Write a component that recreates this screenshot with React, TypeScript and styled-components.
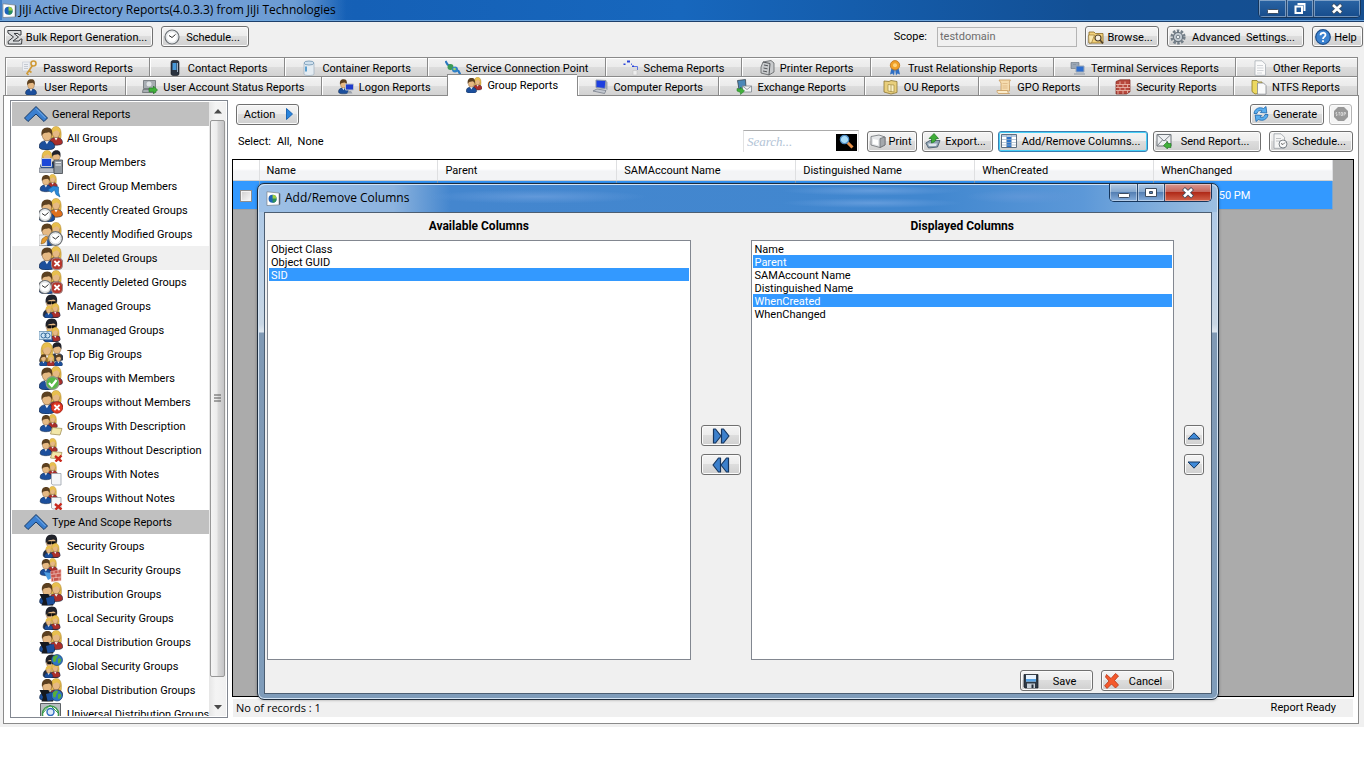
import React from "react";
import styled, { createGlobalStyle, css } from "styled-components";

const UI = `Roboto, "Liberation Sans", Arial, sans-serif`;
const TITLE = `"Open Sans", "Noto Sans", sans-serif`;

const GlobalStyle = createGlobalStyle`
  * { box-sizing: border-box; }
  body { margin: 0; background: #fff; font: 11px/16px ${UI}; color: #000; }
  button, input, select { font: inherit; color: inherit; }
  svg { display: block; flex: none; }
`;

/* ---------- icon pieces ---------- */

type PersonProps = { x?: number; y?: number; s?: number; hair?: string; body?: string; long?: boolean; shades?: boolean };

const Person = ({ x = 0, y = 0, s = 1, hair = "#5c4020", body = "#1c4f9c", long, shades }: PersonProps) => (
  <g transform={`translate(${x} ${y}) scale(${s})`}>
    {long && <path d="M2.500 14C1.200 4 4 .6 8 .6s6.800 3.400 5.500 13.400z" fill={hair} stroke="#a37a1c" strokeWidth=".5" />}
    <path d="M.6 19C.6 15 3.500 13 8 13s7.400 2 7.400 6c0 3.800-14.800 3.800-14.800 0z" fill={body} stroke="#10233f" strokeWidth=".6" />
    <path d="M6 13l2 3.500 2-3.500z" fill="#f4f6fa" />
    <ellipse cx="8" cy="7.800" rx="4.400" ry="5.400" fill="#e6b983" stroke="#7c5630" strokeWidth=".5" />
    <path d={long ? "M3.400 9C2.800 3 5 1.200 8 1.200s5 1.800 4.800 7.800C11.500 6 9.500 5 8.500 4.800 7 6 4.500 6 3.400 9z" : "M3 8.500C2 3 4.500.4 8.300.4c4 0 5.500 2.600 4.600 8.100C12.200 6 11 5.200 9.600 5 7 5.800 4.500 5 3 8.500z"} fill={hair} />
    {shades && <path d="M4 6.800h3.600v2.200H4.600zM8.400 6.800H12l-.6 2.200H8.400zM7.600 7h.8" fill="#111" stroke="#111" strokeWidth=".5" />}
  </g>
);

const BLONDE = "#e8bf4e";
const RED = "#a92f2b";
const DARK = "#20222a";

const BigPair = ({ right = RED }: { right?: string }) => (
  <g>
    <Person x={10} y={0} s={0.880} hair={BLONDE} body={right} long />
    <Person x={-0.500} y={1} s={1.050} />
  </g>
);
const SmallPair = ({ x = 1, y = 0, s = 0.680 }: { x?: number; y?: number; s?: number }) => (
  <g transform={`translate(${x} ${y}) scale(${s})`}>
    <BigPair />
  </g>
);
const Clock = ({ x, y, r = 6.500 }: { x: number; y: number; r?: number }) => (
  <g>
    <circle cx={x} cy={y} r={r} fill="#f1f4f6" stroke="#6c7074" strokeWidth="1.200" />
    <circle cx={x} cy={y} r={r - 1.600} fill="#fff" stroke="#c4c8cc" strokeWidth=".5" />
    <path d={`M${x - 3} ${y - 1.500}L${x} ${y + 0.500}L${x + 3.500} ${y - 2.500}`} fill="none" stroke="#333" strokeWidth="1" />
  </g>
);
const CrossBadge = ({ round }: { round?: boolean }) => (
  <g>
    {round ? <circle cx="18" cy="17.500" r="5.700" fill="#e03a26" stroke="#a31d10" strokeWidth=".8" /> : <rect x="12.500" y="12" width="11" height="11.500" rx="4" fill="#b5352c" stroke="#9d8c8c" strokeWidth="1" />}
    <path d="M15.400 15l5.200 5.200M20.600 15l-5.200 5.200" stroke="#fff" strokeWidth="1.800" />
  </g>
);
const RedX = () => <path d="M16 18l6.500 5.500M22.500 17.500L16.500 23.500" stroke="#c8281c" strokeWidth="2.400" fill="none" />;
const Globe = ({ x, y, r = 5.500 }: { x: number; y: number; r?: number }) => (
  <g transform={`translate(${x} ${y}) scale(${r / 5.500})`}>
    <circle r="5.500" fill="#2f76c4" stroke="#1a4374" strokeWidth=".7" />
    <path d="M-4-3C-2-5 1-5 1-4S-1-2-1 0-3 3-4 1zM1-1C3-3 5-1 4 1S2 4 1 3z" fill="#58ae3a" />
  </g>
);
const Note = ({ fill = "#f2e7a8" }: { fill?: string }) => <path d="M13.500 13.500l9.500 1-2 6.500-9.500-1z" fill={fill} stroke="#a5935a" strokeWidth=".8" />;
const Page = () => <path d="M12.500 11.500h9.500V23h-8l-1.500-1z" fill="#f4f6f8" stroke="#9aa1aa" strokeWidth=".8" />;
const Laptop = () => <path d="M.5 12h9l3 7H16l-2 4.500H2.500L4 19z" fill="#15181f" />;
const Agent = () => (
  <g>
    <Person x={3.500} y={0} s={1.120} hair={DARK} body="#2a3040" shades />
    <Person x={11} y={9} s={0.660} hair={BLONDE} body={RED} long />
    <Person x={5} y={11.500} s={0.580} hair={BLONDE} />
  </g>
);
const Typist = () => (
  <g>
    <Person x={10} y={0} s={0.900} hair={BLONDE} body={RED} long />
    <Person x={0} y={0.500} s={1.020} />
    <Laptop />
    <path d="M7 16l8-2 .5 8-7 1z" fill="#1c4f9c" />
  </g>
);

const groupArt: Record<string, React.ReactNode> = {
  all: <BigPair />,
  members: (
    <g>
      <Person x={10.500} y={0} s={0.840} hair={DARK} body="#333a48" />
      <Person x={1} y={0} s={0.880} hair={BLONDE} long />
      <path d="M2.500 8.500h10v8h-10z" fill="#1d48d8" stroke="#c5cbd6" />
      <path d="M0 18h14l1.500 4.500H.5z" fill="#b7bdc8" stroke="#5b6371" strokeWidth=".6" />
      <path d="M15 10h8.500v13.500H15z" fill="#8f979f" stroke="#42484f" strokeWidth=".8" />
      <path d="M16.500 12.500h5.500M16.500 15h5.500" stroke="#e7eaee" />
    </g>
  ),
  direct: (
    <g>
      <SmallPair s={0.740} />
      <path d="M9 16l5-4 5.500 1v5.500l1.500 4.500-4-2.500-1.500-4.500-3 2.500z" fill="#2b8ad8" stroke="#1560a0" strokeWidth=".6" />
    </g>
  ),
  created: <g><BigPair right="#e0701c" /><Clock x={6} y={17} /></g>,
  modified: (
    <g>
      <BigPair />
      <path d="M0 13h8v10.500H0z" fill="#f0f1f3" stroke="#9a9a9a" strokeWidth=".6" />
      <path d="M2 22l1-5 4-3 2 2-3.500 5z" fill="#e59a2c" stroke="#7c4d0c" strokeWidth=".5" />
      <Clock x={16.500} y={16.500} r={6.800} />
    </g>
  ),
  deleted: <g><BigPair /><CrossBadge /></g>,
  recentDeleted: <g><BigPair /><Clock x={6} y={17} /><CrossBadge /></g>,
  agent: <Agent />,
  unmanaged: (
    <g>
      <Agent />
      <path d="M0 13.500h12.500v8H0z" fill="#cfe6f6" stroke="#6a8fb0" strokeWidth=".8" />
      <circle cx="4.500" cy="17.500" r="2.500" fill="none" stroke="#356c9c" /><circle cx="8.500" cy="17.500" r="2.500" fill="none" stroke="#356c9c" />
    </g>
  ),
  top: (
    <g>
      <Person x={11} y={0} s={0.880} hair={DARK} body="#333a48" />
      <Person x={0} y={0} s={1} hair={BLONDE} body="#8f6a2c" long />
      <Person x={0} y={12} s={0.560} /><Person x={7.500} y={12} s={0.560} hair={BLONDE} body={RED} long /><Person x={15} y={12} s={0.560} />
    </g>
  ),
  check: (
    <g>
      <BigPair />
      <circle cx="13.500" cy="17" r="6.400" fill="#57b947" stroke="#8a9a88" strokeWidth="1.200" />
      <path d="M10 17l2.800 3 4.700-6" stroke="#fff" strokeWidth="2.200" fill="none" />
    </g>
  ),
  cross: <g><BigPair /><CrossBadge round /></g>,
  note: <g><SmallPair s={0.740} /><Note /></g>,
  noNote: <g><SmallPair s={0.740} /><Note /><RedX /></g>,
  page: <g><SmallPair s={0.740} /><Page /></g>,
  noPage: <g><SmallPair s={0.740} /><Page /><RedX /></g>,
  builtIn: (
    <g>
      <SmallPair s={0.740} />
      <path d="M5 14l7 1 1 5-4 2z" fill="#4a9be0" />
      <path d="M11.500 13.500L22 11.500v11l-9.500 1z" fill="#c8564c" stroke="#e8b0a8" strokeWidth=".6" />
      <path d="M12 16.500l10-1.500M12 20l10-1M15 13v3.500M19 12v3.500M17 16v4M14.500 20v3M20 19v4" stroke="#f0c4bc" strokeWidth=".7" />
    </g>
  ),
  typist: <Typist />,
  globalAgent: <g><Agent /><Globe x={18} y={6} /></g>,
  globalTypist: <g><Typist /><Globe x={18} y={17.500} /></g>,
  universal: (
    <g>
      <path d="M1.500 1.500h20v22h-20z" fill="#b9bec2" stroke="#5d6266" />
      <circle cx="11.500" cy="12" r="8" fill="#fff" stroke="#3c9a4c" strokeWidth="1.400" />
      <circle cx="11.500" cy="10" r="3.500" fill="#dceafa" stroke="#2f6cc0" strokeWidth="1.400" />
      <path d="M3 12L11 3l9 9" stroke="#3c9a4c" fill="none" />
    </g>
  ),
};

const GroupIcon = ({ kind }: { kind: string }) => (
  <svg width="24" height="24" viewBox="0 0 24 24" aria-hidden="true">{groupArt[kind]}</svg>
);

const smallArt: Record<string, React.ReactNode> = {
  app: (
    <g>
      <path d="M1 .8l13 1.400v12.600L1 15.500z" fill="#fdfdfd" stroke="#6e7884" strokeWidth=".7" />
      <path d="M14 2.200l1.200.8v11l-1.200.8z" fill="#4c5664" />
      <circle cx="7" cy="8.200" r="4.300" fill="#1e63b8" />
      <path d="M7 8.200V3.900a4.300 4.300 0 0 1 4.300 4.300z" fill="#9ccf3c" /><path d="M7 8.200h4.300A4.300 4.300 0 0 1 7 12.500z" fill="#2c9058" />
    </g>
  ),
  sigma: (
    <path d="M.8 1.500H14v4.500h-2l-1-1.500H7L11.500 8 6 12h6l1.500-2H15l-.5 5H1.500l-.5-2.500L6.500 8 1 4z" fill="#d8dadc" stroke="#3b3e42" />
  ),
  clock: <Clock x={8} y={8} r={7} />,
  browse: (
    <g>
      <path d="M1 3h5l1.500 1.500H15V14H1z" fill="#f3d27c" stroke="#8a6a24" strokeWidth=".8" />
      <path d="M.5 6h6l-3 8H1z" fill="#fae7ae" stroke="#8a6a24" strokeWidth=".6" />
      <circle cx="10" cy="9" r="3" fill="#f6efe0" stroke="#54432a" strokeWidth="1.200" /><path d="M12 11l3 3.500" stroke="#54432a" strokeWidth="1.800" />
    </g>
  ),
  gear: (
    <g>
      <circle cx="8" cy="8" r="6.300" fill="none" stroke="#75808a" strokeWidth="2.600" strokeDasharray="2.500 1.460" />
      <circle cx="8" cy="8" r="4.600" fill="#c6ced5" stroke="#69747e" strokeWidth="1.200" /><circle cx="8" cy="8" r="1.800" fill="#eef1f3" stroke="#5b6670" strokeWidth=".8" />
    </g>
  ),
  help: (
    <g>
      <circle cx="8" cy="8" r="7.300" fill="#3b82d0" stroke="#1d4f8c" strokeWidth="1.200" />
      <path d="M5.500 6.200C5.500 3 10.500 3 10.500 6c0 2-2.500 1.800-2.500 4M8 11.200v1.800" stroke="#fff" strokeWidth="1.800" fill="none" />
    </g>
  ),
  password: (
    <g>
      <path d="M.5 2h7.500v9H.5z" fill="#eceef2" stroke="#c4c8d0" strokeWidth=".6" /><path d="M2 4.500h4M2 6.500h4M2 8.500h4" stroke="#b4bac4" strokeWidth=".7" />
      <circle cx="11.500" cy="3.500" r="2.500" fill="none" stroke="#cf9a38" strokeWidth="1.600" />
      <path d="M10.500 5.500L5 13.500l1.500 1.500M7.500 11l2 1.500" stroke="#cf9a38" strokeWidth="1.600" fill="none" />
    </g>
  ),
  contact: <g><rect x="4" y=".5" width="8" height="15" rx="2" fill="#2a3340" stroke="#12161c" strokeWidth=".6" /><path d="M5.500 3h4v7h-4z" fill="#4798d8" /><path d="M10.500 3v9" stroke="#9fb2c4" /></g>,
  container: <g><path d="M3 3.500h10V14c0 2-10 2-10 0z" fill="#e4ecf2" stroke="#9db0bf" strokeWidth=".7" /><ellipse cx="8" cy="3" rx="5" ry="2" fill="#cfe0ee" stroke="#6f93b0" strokeWidth=".8" /><path d="M5 6.500v5" stroke="#5a9fd0" strokeWidth="2" /></g>,
  link: <g><path d="M.5 1l2 3.500 4 2.500M9.500 9l4 2 2 4" stroke="#2b78c0" strokeWidth="2.200" fill="none" /><circle cx="5.500" cy="7" r="3" fill="#3c9a54" /><circle cx="10" cy="9.500" r="3" fill="#2f80c8" /><circle cx="9.500" cy="9" r="1.300" fill="#9bdc66" /></g>,
  schema: <g><path d="M4 .5h3v2H4zM.5 3.500h2v1.500h-2zM9 5.500h2v1.500H9z" fill="#2a44d8" /><path d="M11 6.500h3.500V10M8.500 3.500v1.500" stroke="#5c74e4" fill="none" /><path d="M10 10.500h4V15h-4z" fill="#eee" stroke="#c2c2c2" strokeWidth=".6" /></g>,
  printer: <g><path d="M4 2l8-1.500L15 3v9l-5 3-8-2V7z" fill="#c9cbcd" stroke="#4d5053" strokeWidth=".7" /><path d="M4 2l7 1.500L10 15M5 5l4 .8M4.500 8l4 .8M4 11l4 .8" stroke="#55585b" fill="none" /></g>,
  ribbon: <g><path d="M4.500 8L3 14.500l2.500-1 1.500 2L8 9zM11.500 8L13 14.500l-2.500-1-1.500 2L8 9z" fill="#2f6fc4" /><circle cx="8" cy="5.300" r="4.700" fill="#f0a028" stroke="#b9701a" strokeWidth=".8" /><circle cx="8" cy="5.300" r="2" fill="#ffd27a" /></g>,
  terminal: <g><path d="M1 2.500h8v6H1z" fill="#9aa6b4" stroke="#64707c" strokeWidth=".6" /><path d="M6 6h8v6H6z" fill="#2e6fd0" stroke="#9aa6b4" /><path d="M4 14h11M3 4.500h3" stroke="#8a96a4" strokeWidth="1.200" /></g>,
  doc: <g><path d="M3 .8h7l3.500 3.500v11H3z" fill="#fafafa" stroke="#aab0b6" strokeWidth=".8" /><path d="M5 5.500h6M5 8h6.500M5 10.500h6.500M5 13h5" stroke="#c8ccd0" strokeWidth=".8" /></g>,
  user: <Person x={2} y={0} s={0.750} />,
  status: <g><path d="M1.500 1.500h12v8h-12zM1 10.500h11l2 3H.5z" fill="#a7adb2" stroke="#5c6166" strokeWidth=".7" /><circle cx="7" cy="5" r="2.500" fill="#e0e3e6" /><path d="M7 9h4.500V7l4 4-4 4v-2.200H7z" fill="#41b03a" stroke="#1d7420" strokeWidth=".6" /></g>,
  logon: <g><Person x={0} y={0} s={0.680} /><path d="M7.500 5h8v6h-8z" fill="#1f3ccc" stroke="#b8bec8" /><path d="M10.500 12h2.500l1.500 2.500H9z" fill="#9aa1ab" /></g>,
  group: <g transform="scale(.68)"><BigPair /></g>,
  computer: <g><path d="M4 1l10 .5-1 8-9-1z" fill="#1d3fe0" stroke="#8d97a8" /><path d="M1 12l4-2 9 1.500-1.500 3z" fill="#c3c8d0" stroke="#6b7280" strokeWidth=".7" /><path d="M14 2l1.500 1v8l-2-1" fill="#9aa2b0" /></g>,
  exchange: <g><path d="M1.500 1.500l8-1 .5 9-7 1z" fill="#4a88b8" stroke="#38444e" strokeWidth=".8" /><path d="M6.500 7h9v6h-9z" fill="#f2f4f6" stroke="#7d858d" strokeWidth=".8" /><path d="M6.500 7l4.500 3.500L15.500 7" stroke="#7d858d" fill="none" strokeWidth=".8" /><path d="M1 9.500l3.500.5v-2l4 4-4 3.500v-2L1 12z" fill="#41b03a" stroke="#1d7420" strokeWidth=".5" /></g>,
  ou: <g><path d="M1 2l5 .5 2-1 6 1v11L8 15l-7-2z" fill="#e9cf7c" stroke="#8a7430" strokeWidth=".8" /><path d="M5 5.500l6 .5v7l-6-1zM8 6v7" fill="#faf0c4" stroke="#a08a40" strokeWidth=".7" /></g>,
  gpo: <g><path d="M3 1h11.500c-1.500 1.500-1 3-1 4.500V12H5V4z" fill="#f6dcae" stroke="#c89a5c" strokeWidth=".8" /><path d="M1 11.500h10.500c0 1.500 1 3 2 3H3c-1.500 0-2-1.500-2-3z" fill="#fbeccb" stroke="#c89a5c" strokeWidth=".8" /><path d="M6.500 4.500h5M6.500 7h5M6.500 9h5" stroke="#d8b07c" strokeWidth=".7" /></g>,
  brick: <g><path d="M1 2.500L5 .8h10v12L11.500 15H1z" fill="#b8483c" stroke="#7c2a22" strokeWidth=".7" /><path d="M1 5.500h14M1 8.500h14M1 11.500h14M5 2.500v3M10 2.500v3M3 5.500v3M8 5.500v3M12.500 5.500v3M5 8.500v3M10 8.500v3M3 11.500V15M8 11.500V15M12.500 11.500V14" stroke="#ecc0b4" strokeWidth=".8" /></g>,
  ntfs: <g><path d="M1 1.500h5L7 3h4v11l-7 1-3-2.500z" fill="#ecd860" stroke="#8c7a20" strokeWidth=".8" /><path d="M6.500 4h6l2.500 2.500v8.700H6.500z" fill="#fafafa" stroke="#85898e" strokeWidth=".8" /></g>,
  refresh: <g><path d="M1 7.500C1.500 2.500 6.500.5 10.500 2.500L13 .5l.8 6.500-6.500-.5L9 4.800C6.500 4 4.500 5 4 7.500z" fill="#5aaeee" stroke="#1c66ac" strokeWidth=".8" /><path d="M15 8.500c-.5 5-5.500 7-9.500 5L3 15.500 2.200 9l6.500.5L7 11.200c2.500.8 4.500-.2 5-2.700z" fill="#5aaeee" stroke="#1c66ac" strokeWidth=".8" /></g>,
  print: <g><path d="M1 3.500l8-1.500 6 2v8l-5 2.500L1 12z" fill="#e4e6e8" stroke="#6c7074" strokeWidth=".8" /><path d="M10 5.500v9l5-2.500V4z" fill="#a4a8ac" stroke="#6c7074" strokeWidth=".8" /><path d="M3 6l5 1v5l-5-1z" fill="#fff" /></g>,
  export: <g><path d="M.8 10l4-2.500H15L12.500 14l-9 1z" fill="#8fa3b4" stroke="#3f5262" strokeWidth=".8" /><path d="M3 10.500h9l-1 2.500H4z" fill="#dfe6ec" /><path d="M6.500 10V5.500H4L9 .5l4.500 5H11c0 2-1 3.500-4.500 4.500z" fill="#3fae38" stroke="#1b7020" strokeWidth=".7" /></g>,
  columns: <g><path d="M.5 1.500h15v13H.5z" fill="#fff" stroke="#5e6e80" /><path d="M5.500 2h5v12h-5z" fill="#2c73c8" /><path d="M1 2h14v2H1z" fill="#b4c8de" /><path d="M1 6.500h14M1 9.500h14M1 12h14M5.500 2v12M10.500 2v12" stroke="#9cb0c6" strokeWidth=".7" /></g>,
  mail: <g><path d="M1 1.500h14v11.500H1z" fill="#eef0f2" stroke="#6d7378" /><path d="M1 1.500l7 6.500 7-6.500M1 13l5.500-6M15 13L9.500 7" stroke="#7b8187" fill="none" /><path d="M7.500 12.500l4-4v2h3.500v4h-3.500v1.500z" fill="#41b03a" stroke="#1b7020" strokeWidth=".6" /></g>,
  docClock: <g><path d="M2 .8h7l3.500 3.500v11H2z" fill="#f5f5f5" stroke="#9aa0a6" strokeWidth=".8" /><path d="M4 5.500h5M4 8h4" stroke="#b0b4b8" strokeWidth=".8" /><circle cx="11" cy="11" r="4" fill="#f8f8f8" stroke="#7c8288" /><path d="M9 10.500l2 1 2-2" stroke="#444" fill="none" strokeWidth=".8" /></g>,
  save: <g><path d="M1 1.500h14V15H2L1 14z" fill="#2f3a46" stroke="#151b22" strokeWidth=".7" /><path d="M3 2h10v6.500H3z" fill="#e8f2fc" /><path d="M3 6h10v2.500H3z" fill="#57a4e6" /><path d="M4 10.500h8V15H4z" fill="#c8d0d8" /><path d="M8.500 11.500h2V15h-2z" fill="#222c38" /></g>,
  cancel: <path d="M2.500 1.500L7 5.500l4.500-5L14.500 3 10.500 7.500l4 4.500-3 3-4-4-4.500 4.500-2.300-2.800L5 8 1.500 4z" fill="#f4592c" stroke="#b83414" strokeWidth=".8" />,
};

const Icon = ({ kind, size = 16 }: { kind: string; size?: number }) => (
  <svg width={size} height={size} viewBox="0 0 16 16" aria-hidden="true">{smallArt[kind]}</svg>
);

/* ---------- window chrome ---------- */

const Window = styled.div`
  position: relative;
  background: #f0f0f0;
  padding-bottom: 3px;
`;

const TitleBar = styled.header`
  display: flex;
  align-items: flex-start;
  height: 22px;
  padding: 0 3px 0 2px;
  border-bottom: 1px solid #1d3f6b;
  box-shadow: inset 0 -1px #6ea6dd;
  background: linear-gradient(90deg, #3f7dc4 0, #1560b6 26%, #1767bd 50%, #124f94 80%, #164f90 100%);
`;

const Caption = styled.h1`
  display: flex;
  align-items: center;
  gap: 2px;
  margin: 0 auto 0 0;
  padding-right: 10px;
  height: 20px;
  font: 12px/20px ${TITLE};
  background: linear-gradient(90deg, #6f9fd6, #7aa5d8 20%, #6c9cd4 85%, transparent);
`;

const WindowButtons = styled.div`
  display: flex;
  height: 18px;
  border: 1px solid #16365c;
  border-top: 0;
  border-radius: 0 0 5px 5px;
  overflow: hidden;
`;

const WindowButton = styled.button<{ $wide?: boolean; $tone?: "bar" | "glass" | "red" }>`
  display: grid;
  place-items: center;
  width: ${(p) => (p.$wide ? 47 : 27)}px;
  padding: 0;
  border: 0;
  box-shadow: inset 0 0 0 1px rgba(255, 255, 255, 0.4);
  background: ${(p) =>
    p.$tone === "red"
      ? "linear-gradient(#d99a94 0, #c4665c 45%, #b02a18 50%, #d2624a 100%)"
      : p.$tone === "glass"
      ? "linear-gradient(#b4cbe4 0, #86a9d0 45%, #5580b4 50%, #86aedc 100%)"
      : "linear-gradient(#2a64a4, #164c8c)"};
  & + & { border-left: 1px solid #2b4a70; }
`;

const Minimize = () => (
  <svg width="12" height="12"><rect x=".5" y="6.500" width="11" height="4" rx="1" fill="#fff" stroke="#3c4c60" /></svg>
);
const Maximize = () => (
  <svg width="12" height="12"><path d="M.5 1.500h11v8H.5zM4.500 4.500h3v2h-3z" fill="#fff" fillRule="evenodd" stroke="#3c4c60" /></svg>
);
const Restore = () => (
  <svg width="12" height="12"><path d="M3.500 1h7v7M1.500 3.500h6.500v6.500H1.500z" fill="none" stroke="#fff" strokeWidth="2" /></svg>
);
const CloseX = () => (
  <svg width="14" height="12"><path d="M2.500 1.500l9 8.500M11.500 1.500l-9 8.500" stroke="#3c4c60" strokeWidth="4.200" /><path d="M3 2l8 7.500M11 2L3 9.500" stroke="#fff" strokeWidth="2.600" /></svg>
);

/* ---------- shared controls ---------- */

const Text = styled.span`
  padding-top: 2px;
`;

const Button = styled.button<{ $w?: number; $active?: boolean }>`
  display: inline-flex;
  align-items: center;
  justify-content: center;
  flex: none;
  height: 21px;
  min-width: ${(p) => p.$w ?? 20}px;
  padding: 0 2px;
  white-space: nowrap;
  border: 1px solid #707070;
  border-radius: 3px;
  background: linear-gradient(#f4f4f4 0, #ececec 48%, #dddddd 50%, #d0d0d0 100%);
  box-shadow: inset 0 0 0 1px #fbfbfb;
  ${(p) => p.$active && css`
    border-color: #3c7fb1;
    box-shadow: inset 0 0 0 1px #48d0f8;
  `}
  &:disabled { border-color: #b4b4b4; background: #f4f4f4; }
  ${Text} {
    flex: 1;
    text-align: center;
  }
`;

const Toolbar = styled.div`
  display: flex;
  align-items: center;
  gap: 8px;
  height: 35px;
  padding: 0 1px 6px 4px;
`;

const ScopeField = styled.div`
  display: flex;
  align-items: center;
  gap: 10px;
  margin-left: auto;
`;

const ScopeInput = styled.input`
  width: 140px;
  height: 20px;
  padding: 0 2px;
  border: 1px solid #b4b4b4;
  background: #f0f0f0;
  color: #6d6d6d;
`;

/* ---------- tabs ---------- */

const TabRow = styled.div`
  display: flex;
  height: 19px;
  margin: 0 6px 0 5px;
  border-right: 1px solid #8a8a8a;
`;

const Tab = styled.button<{ $grow: number; $on?: boolean }>`
  display: flex;
  align-items: center;
  justify-content: center;
  gap: 5px;
  flex: ${(p) => p.$grow} 1 0;
  min-width: 0;
  height: 19px;
  padding: 2px 0 0;
  white-space: nowrap;
  overflow: hidden;
  border: 0;
  border-top: 1px solid #8a8a8a;
  border-left: 1px solid #8a8a8a;
  box-shadow: inset 1px 1px #fff;
  background: linear-gradient(#f2f2f2 0, #ebebeb 48%, #dddddd 50%, #d2d2d2 100%);
  ${(p) => p.$on && css`
    height: 22px;
    margin-top: -2px;
    z-index: 1;
    padding: 0 0 2px;
    background: #fff;
  `}
`;

const TabPanel = styled.main`
  display: flex;
  gap: 4px;
  margin: 0 5px 0 3px;
  padding: 4px 4px 5px 6px;
  border: 1px solid #8a8a8a;
  background: #fff;
`;

/* ---------- sidebar ---------- */

const Sidebar = styled.nav`
  display: flex;
  flex: none;
  width: 218px;
  height: 618px;
  border: 1px solid #828790;
  padding: 1px;
`;

const Tree = styled.div`
  flex: 1;
  overflow: hidden;
`;

const SectionHeader = styled.button`
  display: flex;
  align-items: center;
  gap: 4px;
  width: 100%;
  height: 24px;
  padding: 0 0 0 12px;
  border: 0;
  background: #c0c0c0;
`;

const TreeList = styled.ul`
  margin: 0;
  padding: 0;
  list-style: none;
`;

const TreeLink = styled.a<{ $on?: boolean }>`
  display: flex;
  align-items: center;
  gap: 4px;
  height: 24px;
  padding-left: 27px;
  white-space: nowrap;
  color: inherit;
  text-decoration: none;
  background: ${(p) => (p.$on ? "#f0f0f0" : "transparent")};
`;

const ScrollBar = styled.div`
  display: flex;
  flex-direction: column;
  align-items: center;
  width: 17px;
  background: linear-gradient(90deg, #e6e6e6, #f4f4f4 40%, #f0f0f0);
`;

const ScrollArrow = styled.button`
  display: grid;
  place-items: center;
  width: 17px;
  height: 18px;
  padding: 0;
  border: 0;
  background: transparent;
`;

const Thumb = styled.div`
  display: grid;
  place-items: center;
  width: 15px;
  height: 557px;
  margin-bottom: auto;
  border: 1px solid #979797;
  border-radius: 2px;
  background: linear-gradient(90deg, #f4f4f4 0, #ebebeb 48%, #dadada 52%, #c4c4c6 100%);
`;

const Chevron = () => (
  <svg width="24" height="18" viewBox="0 0 24 18" aria-hidden="true">
    <path d="M12 1.500L23.500 13l-3.500 3.500-8-7.500-8 7.500L.5 13z" fill="#3a7fd0" stroke="#173a66" />
    <path d="M12 3.500L21.500 13" stroke="#7fb4ec" fill="none" />
  </svg>
);

/* ---------- report pane ---------- */

const Report = styled.section`
  display: flex;
  flex: 1;
  flex-direction: column;
  min-width: 0;
`;

const ActionRow = styled.div<{ $tall?: boolean }>`
  display: flex;
  align-items: center;
  gap: ${(p) => (p.$tall ? 8 : 5)}px;
  height: ${(p) => (p.$tall ? 30 : 24)}px;
  padding: 0 ${(p) => (p.$tall ? 1 : 2)}px 0 4px;
  margin-top: ${(p) => (p.$tall ? 0 : 2)}px;
`;

const Push = styled.div`
  display: flex;
  align-items: center;
  gap: 5px;
  margin-left: auto;
`;

const SelectLinks = styled.div`
  display: flex;
  gap: 6px;
  padding: 2px 0 0 2px;
  a { color: inherit; text-decoration: none; }
`;

const SearchBox = styled.div`
  display: flex;
  align-items: center;
  width: 116px;
  height: 22px;
  margin-right: 3px;
  padding: 1px 1px 0 3px;
  border: solid #e2e2e2;
  border-width: 1px 1px 0;
  border-top-color: #ababab;
  input {
    flex: 1;
    min-width: 0;
    padding: 0;
    border: 0;
    outline: 0;
    font: italic 13px/18px "Liberation Serif", serif;
    &::placeholder { color: #b3c4d6; opacity: 1; }
  }
  button {
    display: grid;
    place-items: center;
    width: 21px;
    height: 17px;
    padding: 0;
    border: 0;
    background: #000;
  }
`;

const TableFrame = styled.div`
  flex: 1;
  margin-top: 3px;
  border: 1px solid #000;
  background: #ababab;
  overflow: hidden;
`;

const DataTable = styled.table`
  width: 1100px;
  table-layout: fixed;
  border-collapse: collapse;
  th, td { padding: 3px 0 0 7px; text-align: left; font-weight: 400; }
  th {
    height: 20px;
    border-right: 1px solid #dedfe1;
    border-bottom: 1px solid #d0d0d0;
    background: linear-gradient(#fff 45%, #f3f4f6 55%);
  }
  td {
    height: 29px;
    color: #fff;
    background: #3399ff;
    border-right: 1px solid #7ba6d0;
    border-bottom: 1px solid #a0a0a0;
    white-space: nowrap;
  }
  input {
    display: block;
    appearance: none;
    width: 12px;
    height: 12px;
    margin: 0;
    border: 1px solid #8e8f8f;
    background: linear-gradient(135deg, #cfcfcf, #fafafa);
    box-shadow: inset 0 0 0 1px #f4f4f4;
  }
`;

const StatusBar = styled.footer`
  display: flex;
  justify-content: space-between;
  align-items: center;
  height: 18px;
  margin: 2px 1px 1px;
  padding: 0 17px 0 3px;
  background: #f0f0f0;
`;

const RecordCount = styled.span`
  font: 11px/18px ${TITLE};
`;

/* ---------- dialog ---------- */

const DialogWindow = styled.div`
  position: absolute;
  top: 183px;
  left: 257px;
  z-index: 2;
  width: calc(100% - 402px);
  padding: 0 6px 5px;
  border: 1px solid #1e2c3c;
  border-radius: 7px;
  background: linear-gradient(#a8c6e6 0, #c8d6e4 140px, #dfe7ef 148px, #8099b4 149px, #7f9cba 100%);
  box-shadow: inset 0 0 0 1px #d4e4f4, 0 0 3px rgba(0, 0, 0, 0.35);
`;

const DialogTitle = styled.div`
  display: flex;
  align-items: flex-start;
  height: 28px;
  margin: 0 -5px;
  padding: 0 5px 0 7px;
  border-radius: 6px 6px 0 0;
  box-shadow: inset 0 1px #cfe3f8;
  background:
    radial-gradient(ellipse 110px 7px at 29% 45%, #6299da, transparent),
    radial-gradient(ellipse 90px 5px at 64% 24%, #649cdc, transparent),
    radial-gradient(ellipse 90px 5px at 64% 68%, #649cdc, transparent),
    radial-gradient(ellipse 60px 7px at 80% 45%, #5f97d8, transparent),
    linear-gradient(90deg, #9fc1e6 0, #8cb3de 14%, #4486ce 20%, #4187cf 70%, #5c98d8 86%, #9dbfe0 100%);
  h2 {
    display: flex;
    align-items: center;
    gap: 4px;
    height: 28px;
    margin: 0 auto 0 0;
    font: 12px/28px ${TITLE};
  }
`;

const DialogBody = styled.div`
  padding: 5px 7px 2px 2px;
  border: 1px solid #4c5e72;
  background: #f0f0f0;
`;

const Picker = styled.div`
  display: flex;
  gap: 10px;
`;

const PickerColumn = styled.div`
  display: flex;
  flex: 1;
  flex-direction: column;
  min-width: 0;
  label {
    height: 22px;
    font-weight: 700;
    font-size: 12px;
    text-align: center;
  }
`;

const ListBox = styled.select`
  height: 420px;
  padding: 1px;
  border: 1px solid #828790;
  border-radius: 0;
  outline: 0;
  background: #fff;
  overflow: hidden;
  option {
    height: 13px;
    min-height: 13px;
    padding: 1px 2px 0;
    line-height: 13px;
  }
  option:checked {
    background: linear-gradient(#3399ff, #3399ff);
    -webkit-text-fill-color: #fff;
  }
`;

const MoveButtons = styled.div<{ $w: number }>`
  display: flex;
  flex-direction: column;
  gap: 8px;
  width: ${(p) => p.$w}px;
  padding-top: 207px;
`;

const DialogActions = styled.div`
  display: flex;
  justify-content: flex-end;
  gap: 8px;
  padding: 10px 30px 0 0;
`;

const DoubleArrow = ({ back }: { back?: boolean }) => (
  <svg width="18" height="16" viewBox="0 0 18 16" aria-hidden="true">
    <path transform={back ? "matrix(-1 0 0 1 18 0)" : undefined} d="M1.500 1h2L9 8l-5.500 7h-2zM9.500 1h2L17 8l-5.500 7h-2z" fill="#3c80cc" stroke="#153660" strokeWidth="1.200" strokeLinejoin="round" />
  </svg>
);
const SmallArrow = ({ down }: { down?: boolean }) => (
  <svg width="14" height="8" viewBox="0 0 14 8" aria-hidden="true">
    <path transform={down ? "matrix(1 0 0 -1 0 8)" : undefined} d="M7 .8L13 7H1z" fill="#3f8ad8" stroke="#153660" />
  </svg>
);

/* ---------- data ---------- */

const tabsBack: [string, string, number][] = [
  ["password", "Password Reports", 144], ["contact", "Contact Reports", 135], ["container", "Container Reports", 143],
  ["link", "Service Connection Point", 178], ["schema", "Schema Reports", 136], ["printer", "Printer Reports", 129],
  ["ribbon", "Trust Relationship Reports", 183], ["terminal", "Terminal Services Reports", 182], ["doc", "Other Reports", 122],
];
const tabsFront: [string, string, number][] = [
  ["user", "User Reports", 120], ["status", "User Account Status Reports", 196], ["logon", "Logon Reports", 126],
  ["group", "Group Reports", 130], ["computer", "Computer Reports", 141], ["exchange", "Exchange Reports", 146],
  ["ou", "OU Reports", 114], ["gpo", "GPO Reports", 120], ["brick", "Security Reports", 135], ["ntfs", "NTFS Reports", 124],
];
const generalReports: [string, string][] = [
  ["all", "All Groups"], ["members", "Group Members"], ["direct", "Direct Group Members"], ["created", "Recently Created Groups"],
  ["modified", "Recently Modified Groups"], ["deleted", "All Deleted Groups"], ["recentDeleted", "Recently Deleted Groups"],
  ["agent", "Managed Groups"], ["unmanaged", "Unmanaged Groups"], ["top", "Top Big Groups"], ["check", "Groups with Members"],
  ["cross", "Groups without Members"], ["note", "Groups With Description"], ["noNote", "Groups Without Description"],
  ["page", "Groups With Notes"], ["noPage", "Groups Without Notes"],
];
const scopeReports: [string, string][] = [
  ["agent", "Security Groups"], ["builtIn", "Built In Security Groups"], ["typist", "Distribution Groups"],
  ["agent", "Local Security Groups"], ["typist", "Local Distribution Groups"], ["globalAgent", "Global Security Groups"],
  ["globalTypist", "Global Distribution Groups"], ["universal", "Universal Distribution Groups"],
];
const columns = ["Name", "Parent", "SAMAccount Name", "Distinguished Name", "WhenCreated", "WhenChanged"];

const Section = ({ title, items }: { title: string; items: [string, string][] }) => (
  <>
    <SectionHeader type="button"><Chevron /><Text>{title}</Text></SectionHeader>
    <TreeList>
      {items.map(([kind, text]) => (
        <li key={text}>
          <TreeLink href="#" $on={text === "All Deleted Groups"}><GroupIcon kind={kind} /><Text>{text}</Text></TreeLink>
        </li>
      ))}
    </TreeList>
  </>
);

const IconButton = ({ icon, w, active, children }: { icon: string; w: number; active?: boolean; children: React.ReactNode }) => (
  <Button type="button" $w={w} $active={active}><Icon kind={icon} /><Text>{children}</Text></Button>
);

const Tabs = ({ items }: { items: [string, string, number][] }) => (
  <TabRow>
    {items.map(([kind, text, w]) => (
      <Tab key={text} type="button" $grow={w} $on={kind === "group"}><Icon kind={kind} /><Text>{text}</Text></Tab>
    ))}
  </TabRow>
);

const ColumnsDialog = () => (
  <DialogWindow role="dialog" aria-labelledby="dialog-title">
    <DialogTitle>
      <h2 id="dialog-title"><Icon kind="app" size={15} />Add/Remove Columns</h2>
      <WindowButtons>
        <WindowButton type="button" $tone="glass" aria-label="Minimize"><Minimize /></WindowButton>
        <WindowButton type="button" $tone="glass" aria-label="Maximize"><Maximize /></WindowButton>
        <WindowButton type="button" $tone="red" $wide aria-label="Close"><CloseX /></WindowButton>
      </WindowButtons>
    </DialogTitle>
    <DialogBody>
      <Picker>
        <PickerColumn>
          <label htmlFor="available">Available Columns</label>
          <ListBox id="available" multiple defaultValue={["SID"]}>
            {["Object Class", "Object GUID", "SID"].map((c) => <option key={c}>{c}</option>)}
          </ListBox>
        </PickerColumn>
        <MoveButtons $w={40}>
          <Button type="button" aria-label="Add selected columns"><DoubleArrow /></Button>
          <Button type="button" aria-label="Remove selected columns"><DoubleArrow back /></Button>
        </MoveButtons>
        <PickerColumn>
          <label htmlFor="displayed">Displayed Columns</label>
          <ListBox id="displayed" multiple defaultValue={["Parent", "WhenCreated"]}>
            {columns.map((c) => <option key={c}>{c}</option>)}
          </ListBox>
        </PickerColumn>
        <MoveButtons $w={20}>
          <Button type="button" aria-label="Move up"><SmallArrow /></Button>
          <Button type="button" aria-label="Move down"><SmallArrow down /></Button>
        </MoveButtons>
      </Picker>
      <DialogActions>
        <IconButton icon="save" w={73}>Save</IconButton>
        <IconButton icon="cancel" w={73}>Cancel</IconButton>
      </DialogActions>
    </DialogBody>
  </DialogWindow>
);

export default function App() {
  return (
    <Window>
      <GlobalStyle />
      <TitleBar>
        <Caption><Icon kind="app" size={15} />JiJi Active Directory Reports(4.0.3.3) from JiJi Technologies</Caption>
        <WindowButtons>
          <WindowButton type="button" aria-label="Minimize"><Minimize /></WindowButton>
          <WindowButton type="button" aria-label="Restore"><Restore /></WindowButton>
          <WindowButton type="button" $wide aria-label="Close"><CloseX /></WindowButton>
        </WindowButtons>
      </TitleBar>

      <Toolbar>
        <IconButton icon="sigma" w={149}>Bulk Report Generation...</IconButton>
        <IconButton icon="clock" w={88}>Schedule...</IconButton>
        <ScopeField>
          <label htmlFor="scope">Scope:</label>
          <ScopeInput id="scope" disabled defaultValue="testdomain" />
        </ScopeField>
        <IconButton icon="browse" w={74}>Browse...</IconButton>
        <IconButton icon="gear" w={137}>Advanced&nbsp; Settings...</IconButton>
        <IconButton icon="help" w={51}>Help</IconButton>
      </Toolbar>

      <Tabs items={tabsBack} />
      <Tabs items={tabsFront} />

      <TabPanel>
        <Sidebar aria-label="Reports">
          <Tree>
            <Section title="General Reports" items={generalReports} />
            <Section title="Type And Scope Reports" items={scopeReports} />
          </Tree>
          <ScrollBar>
            <ScrollArrow type="button" aria-label="Scroll up"><svg width="8" height="5"><path d="M4 0l4 4.500H0z" fill="#4a4a4a" /></svg></ScrollArrow>
            <Thumb><svg width="7" height="9"><path d="M0 1h7M0 4h7M0 7h7" stroke="#555" /></svg></Thumb>
            <ScrollArrow type="button" aria-label="Scroll down"><svg width="8" height="5"><path d="M4 4.500L8 0H0z" fill="#4a4a4a" /></svg></ScrollArrow>
          </ScrollBar>
        </Sidebar>

        <Report>
          <ActionRow>
            <Button type="button" $w={63}>
              <Text>Action</Text>
              <svg width="16" height="12" aria-hidden="true"><path d="M6.500.5l6 5.500-6 5.500z" fill="#2a84dc" stroke="#1c66b4" /></svg>
            </Button>
            <Push>
              <IconButton icon="refresh" w={74}>Generate</IconButton>
              <Button type="button" $w={23} disabled aria-label="Stop">
                <svg width="14" height="14" viewBox="0 0 14 14" aria-hidden="true">
                  <path d="M4 0h6l4 4v6l-4 4H4l-4-4V4z" fill="#989898" />
                  <path d="M3 5.500H2v1.500h1v1.500H2M4.500 5.500H6M5.200 5.500v3M7 5.500h1.500v3H7zM10 8.700V5.500h1.500V7H10" stroke="#e4e4e4" strokeWidth=".7" fill="none" />
                </svg>
              </Button>
            </Push>
          </ActionRow>
          <ActionRow $tall>
            <SelectLinks><span>Select:</span><span><a href="#">All</a>,</span><a href="#">None</a></SelectLinks>
            <Push>
              <SearchBox>
                <input type="text" aria-label="Search" placeholder="Search..." />
                <button type="button" aria-label="Search">
                  <svg width="16" height="16" viewBox="0 0 16 16"><path d="M8.500 8.500l5 5" stroke="#e8924a" strokeWidth="3" /><circle cx="5.500" cy="5.500" r="4.200" fill="#a8dcf8" stroke="#4c8ac0" strokeWidth="1.200" /></svg>
                </button>
              </SearchBox>
              <IconButton icon="print" w={50}>Print</IconButton>
              <IconButton icon="export" w={71}>Export...</IconButton>
              <IconButton icon="columns" w={150} active>Add/Remove Columns...</IconButton>
              <IconButton icon="mail" w={108}>Send Report...</IconButton>
            </Push>
            <IconButton icon="docClock" w={84}>Schedule...</IconButton>
          </ActionRow>
          <TableFrame>
            <DataTable>
              <colgroup>
                <col style={{ width: 26 }} />
              </colgroup>
              <thead>
                <tr><th aria-label="Selected" />{columns.map((c) => <th key={c} scope="col">{c}</th>)}</tr>
              </thead>
              <tbody>
                <tr>
                  <td><input type="checkbox" aria-label="Select record" /></td>
                  <td /><td /><td /><td /><td /><td>4/7/2011 2:50 PM</td>
                </tr>
              </tbody>
            </DataTable>
          </TableFrame>
          <StatusBar><RecordCount>No of records : 1</RecordCount><span>Report Ready</span></StatusBar>
        </Report>
      </TabPanel>

      <ColumnsDialog />
    </Window>
  );
}
